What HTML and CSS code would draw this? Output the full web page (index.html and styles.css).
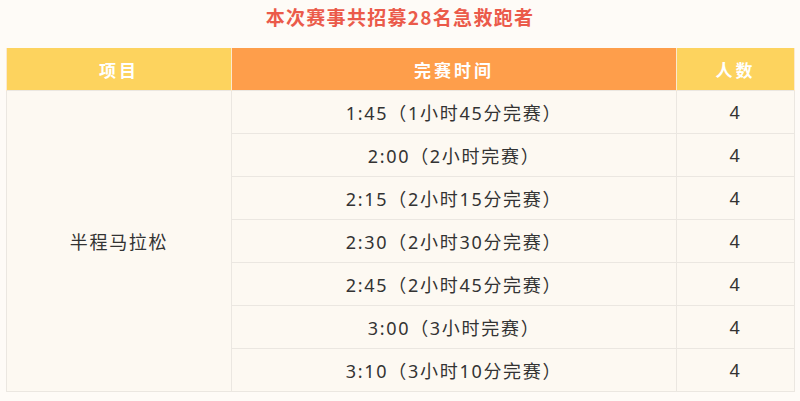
FILE: index.html
```
<!DOCTYPE html>
<html lang="zh">
<head>
<meta charset="utf-8">
<link rel="stylesheet" href="styles.css">
</head>
<body>
<div class="page">
  <h1 class="title">本次赛事共招募28名急救跑者</h1>
  <table class="grid">
    <colgroup>
      <col class="c1"><col class="c2"><col class="c3">
    </colgroup>
    <thead>
      <tr>
        <th class="h-yellow">项目</th>
        <th class="h-orange">完赛时间</th>
        <th class="h-yellow">人数</th>
      </tr>
    </thead>
    <tbody>
      <tr><td rowspan="7">半程马拉松</td><td>1:45（1小时45分完赛）</td><td>4</td></tr>
      <tr><td>2:00（2小时完赛）</td><td>4</td></tr>
      <tr><td>2:15（2小时15分完赛）</td><td>4</td></tr>
      <tr><td>2:30（2小时30分完赛）</td><td>4</td></tr>
      <tr><td>2:45（2小时45分完赛）</td><td>4</td></tr>
      <tr><td>3:00（3小时完赛）</td><td>4</td></tr>
      <tr><td>3:10（3小时10分完赛）</td><td>4</td></tr>
    </tbody>
  </table>
</div>
</body>
</html>
```
FILE: styles.css
```
html, body {
  margin: 0;
  padding: 0;
  background: #fefbf7;
}
.page {
  width: 800px;
  height: 401px;
  padding: 0 6px;
  box-sizing: border-box;
  font-family: "Noto Sans", "Noto Sans CJK SC", sans-serif;
}
.title {
  margin: 0;
  height: 48px;
  padding-top: 5px;
  box-sizing: border-box;
  text-align: center;
  font-size: 19px;
  line-height: 24px;
  letter-spacing: 1.3px;
  font-weight: 700;
  color: #eb5a4a;
  font-family: "Noto Sans CJK SC", sans-serif;
}
.grid {
  width: 788px;
  border-collapse: collapse;
  table-layout: fixed;
}
.c1 { width: 225px; }
.c2 { width: 445px; }
.c3 { width: 118px; }
.grid th {
  height: 42px;
  padding: 0;
  color: #ffffff;
  font-size: 17px;
  font-weight: 700;
  letter-spacing: 3px;
  text-align: center;
  border-left: 1px solid #fbe9cf;
  border-right: 1px solid #fbe9cf;
  font-family: "Noto Sans CJK SC", sans-serif;
}
.h-yellow { background: #fdd35e; }
.h-orange { background: #fe9e4b; }
.grid td {
  height: 42px;
  padding: 0;
  text-align: center;
  font-size: 18px;
  letter-spacing: 1.7px;
  color: #333333;
  background: #fdf9f2;
  border: 1px solid #ebe7e1;
}
```
